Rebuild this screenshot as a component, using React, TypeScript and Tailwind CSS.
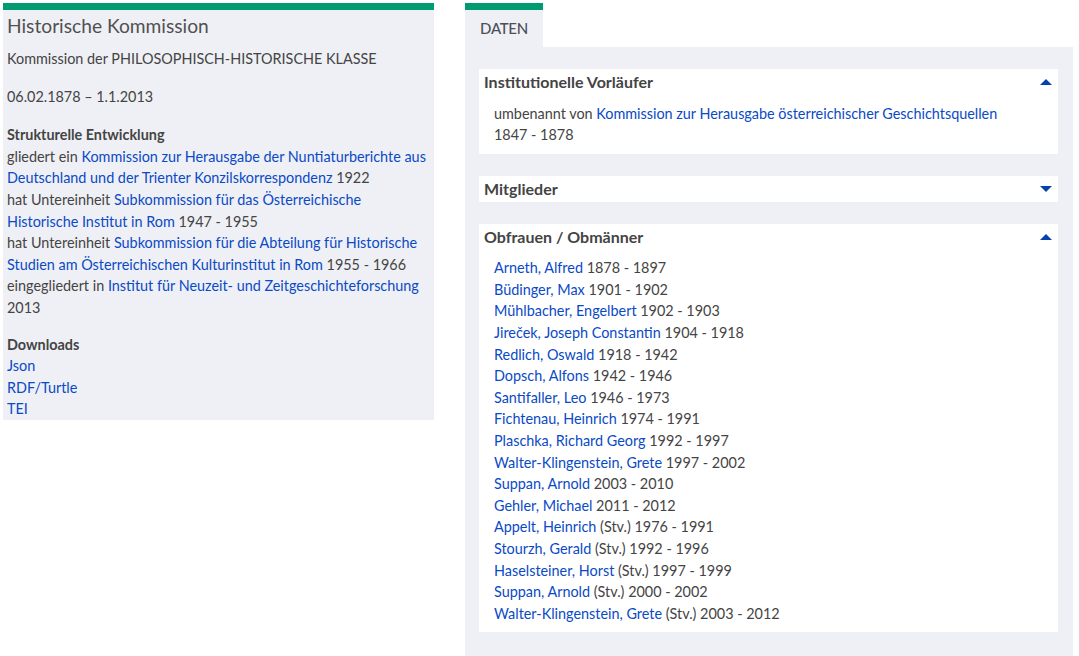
import { ReactNode } from "react";

// Daten der Obleute
const obleute: { name: string; stv?: boolean; jahre: string }[] = [
    { name: "Arneth, Alfred", jahre: "1878 - 1897" },
    { name: "Büdinger, Max", jahre: "1901 - 1902" },
    { name: "Mühlbacher, Engelbert", jahre: "1902 - 1903" },
    { name: "Jireček, Joseph Constantin", jahre: "1904 - 1918" },
    { name: "Redlich, Oswald", jahre: "1918 - 1942" },
    { name: "Dopsch, Alfons", jahre: "1942 - 1946" },
    { name: "Santifaller, Leo", jahre: "1946 - 1973" },
    { name: "Fichtenau, Heinrich", jahre: "1974 - 1991" },
    { name: "Plaschka, Richard Georg", jahre: "1992 - 1997" },
    { name: "Walter-Klingenstein, Grete", jahre: "1997 - 2002" },
    { name: "Suppan, Arnold", jahre: "2003 - 2010" },
    { name: "Gehler, Michael", jahre: "2011 - 2012" },
    { name: "Appelt, Heinrich", stv: true, jahre: "1976 - 1991" },
    { name: "Stourzh, Gerald", stv: true, jahre: "1992 - 1996" },
    { name: "Haselsteiner, Horst", stv: true, jahre: "1997 - 1999" },
    { name: "Suppan, Arnold", stv: true, jahre: "2000 - 2002" },
    { name: "Walter-Klingenstein, Grete", stv: true, jahre: "2003 - 2012" },
];

function A({ children }: { children: ReactNode }) {
    return <a href="#" className="text-[#0a4ac6]">{children}</a>;
}

function Arrow({ up }: { up: boolean }) {
    return (
        <svg width="12" height="6" viewBox="0 0 12 6" className="mr-[1px]">
            {up ? <polygon points="0,6 12,6 6,0" fill="#0b3fae" /> : <polygon points="0,0 12,0 6,6" fill="#0b3fae" />}
        </svg>
    );
}

function Card({ title, open, children }: { title: string; open: boolean; children?: ReactNode }) {
    return (
        <div className="bg-white">
            <div className="h-[26px] px-[5px] flex items-center justify-between">
                <span className="font-bold text-[16px] text-[#444]">{title}</span>
                <Arrow up={open} />
            </div>
            {open && <div className="pl-[15px] pt-[7.5px] pb-[8px]">{children}</div>}
        </div>
    );
}

export default function App() {
    return (
        <div
            className="flex items-start pl-[3px] pt-[3px] gap-[31px] text-[14.4px] leading-[21.6px] text-[#444] bg-white min-h-[656px]"
            style={{ fontFamily: "Lato, 'Open Sans', sans-serif" }}
        >
            {/* Linke Spalte */}
            <div className="w-[431px] bg-[#eff0f5] border-t-[7px] border-[#009b72] px-[4px]">
                <h1 className="text-[19.2px] leading-[30px] pt-[1px] font-normal text-[#505050] mb-[7px]">Historische Kommission</h1>
                <p className="mb-[16px]">Kommission der PHILOSOPHISCH-HISTORISCHE KLASSE</p>
                <p className="mb-[17px]">06.02.1878 – 1.1.2013</p>
                <div className="mb-[15px]">
                    <p className="font-bold">Strukturelle Entwicklung</p>
                    <p>
                        gliedert ein <A>Kommission zur Herausgabe der Nuntiaturberichte aus Deutschland und der Trienter Konzilskorrespondenz</A> 1922
                    </p>
                    <p>
                        hat Untereinheit <A>Subkommission für das Österreichische Historische Institut in Rom</A> 1947 - 1955
                    </p>
                    <p>
                        hat Untereinheit <A>Subkommission für die Abteilung für Historische Studien am Österreichischen Kulturinstitut in Rom</A> 1955 - 1966
                    </p>
                    <p>
                        eingegliedert in <A>Institut für Neuzeit- und Zeitgeschichteforschung</A> 2013
                    </p>
                </div>
                <div>
                    <p className="font-bold">Downloads</p>
                    <p><A>Json</A></p>
                    <p><A>RDF/Turtle</A></p>
                    <p><A>TEI</A></p>
                </div>
            </div>

            {/* Rechte Spalte */}
            <div className="w-[608px] flex flex-col">
                <div className="flex">
                    <div className="w-[78px] h-[44px] bg-[#eff0f5] border-t-[7px] border-[#009b72] flex items-center justify-center text-[15px] font-medium tracking-[-0.3px] text-[#4b4f58] uppercase">
                        Daten
                    </div>
                </div>
                <div className="bg-[#eff0f5] pl-[14px] pr-[15px] pt-[22px] pb-[24px] flex flex-col gap-[22px]">
                    <Card title="Institutionelle Vorläufer" open>
                        <p>
                            umbenannt von <A>Kommission zur Herausgabe österreichischer Geschichtsquellen</A>
                        </p>
                        <p>1847 - 1878</p>
                    </Card>
                    <Card title="Mitglieder" open={false} />
                    <Card title="Obfrauen / Obmänner" open>
                        {obleute.map((o, i) => (
                            <p key={i}>
                                <A>{o.name}</A>
                                {o.stv ? " (Stv.)" : ""} {o.jahre}
                            </p>
                        ))}
                    </Card>
                </div>
            </div>
        </div>
    );
}
